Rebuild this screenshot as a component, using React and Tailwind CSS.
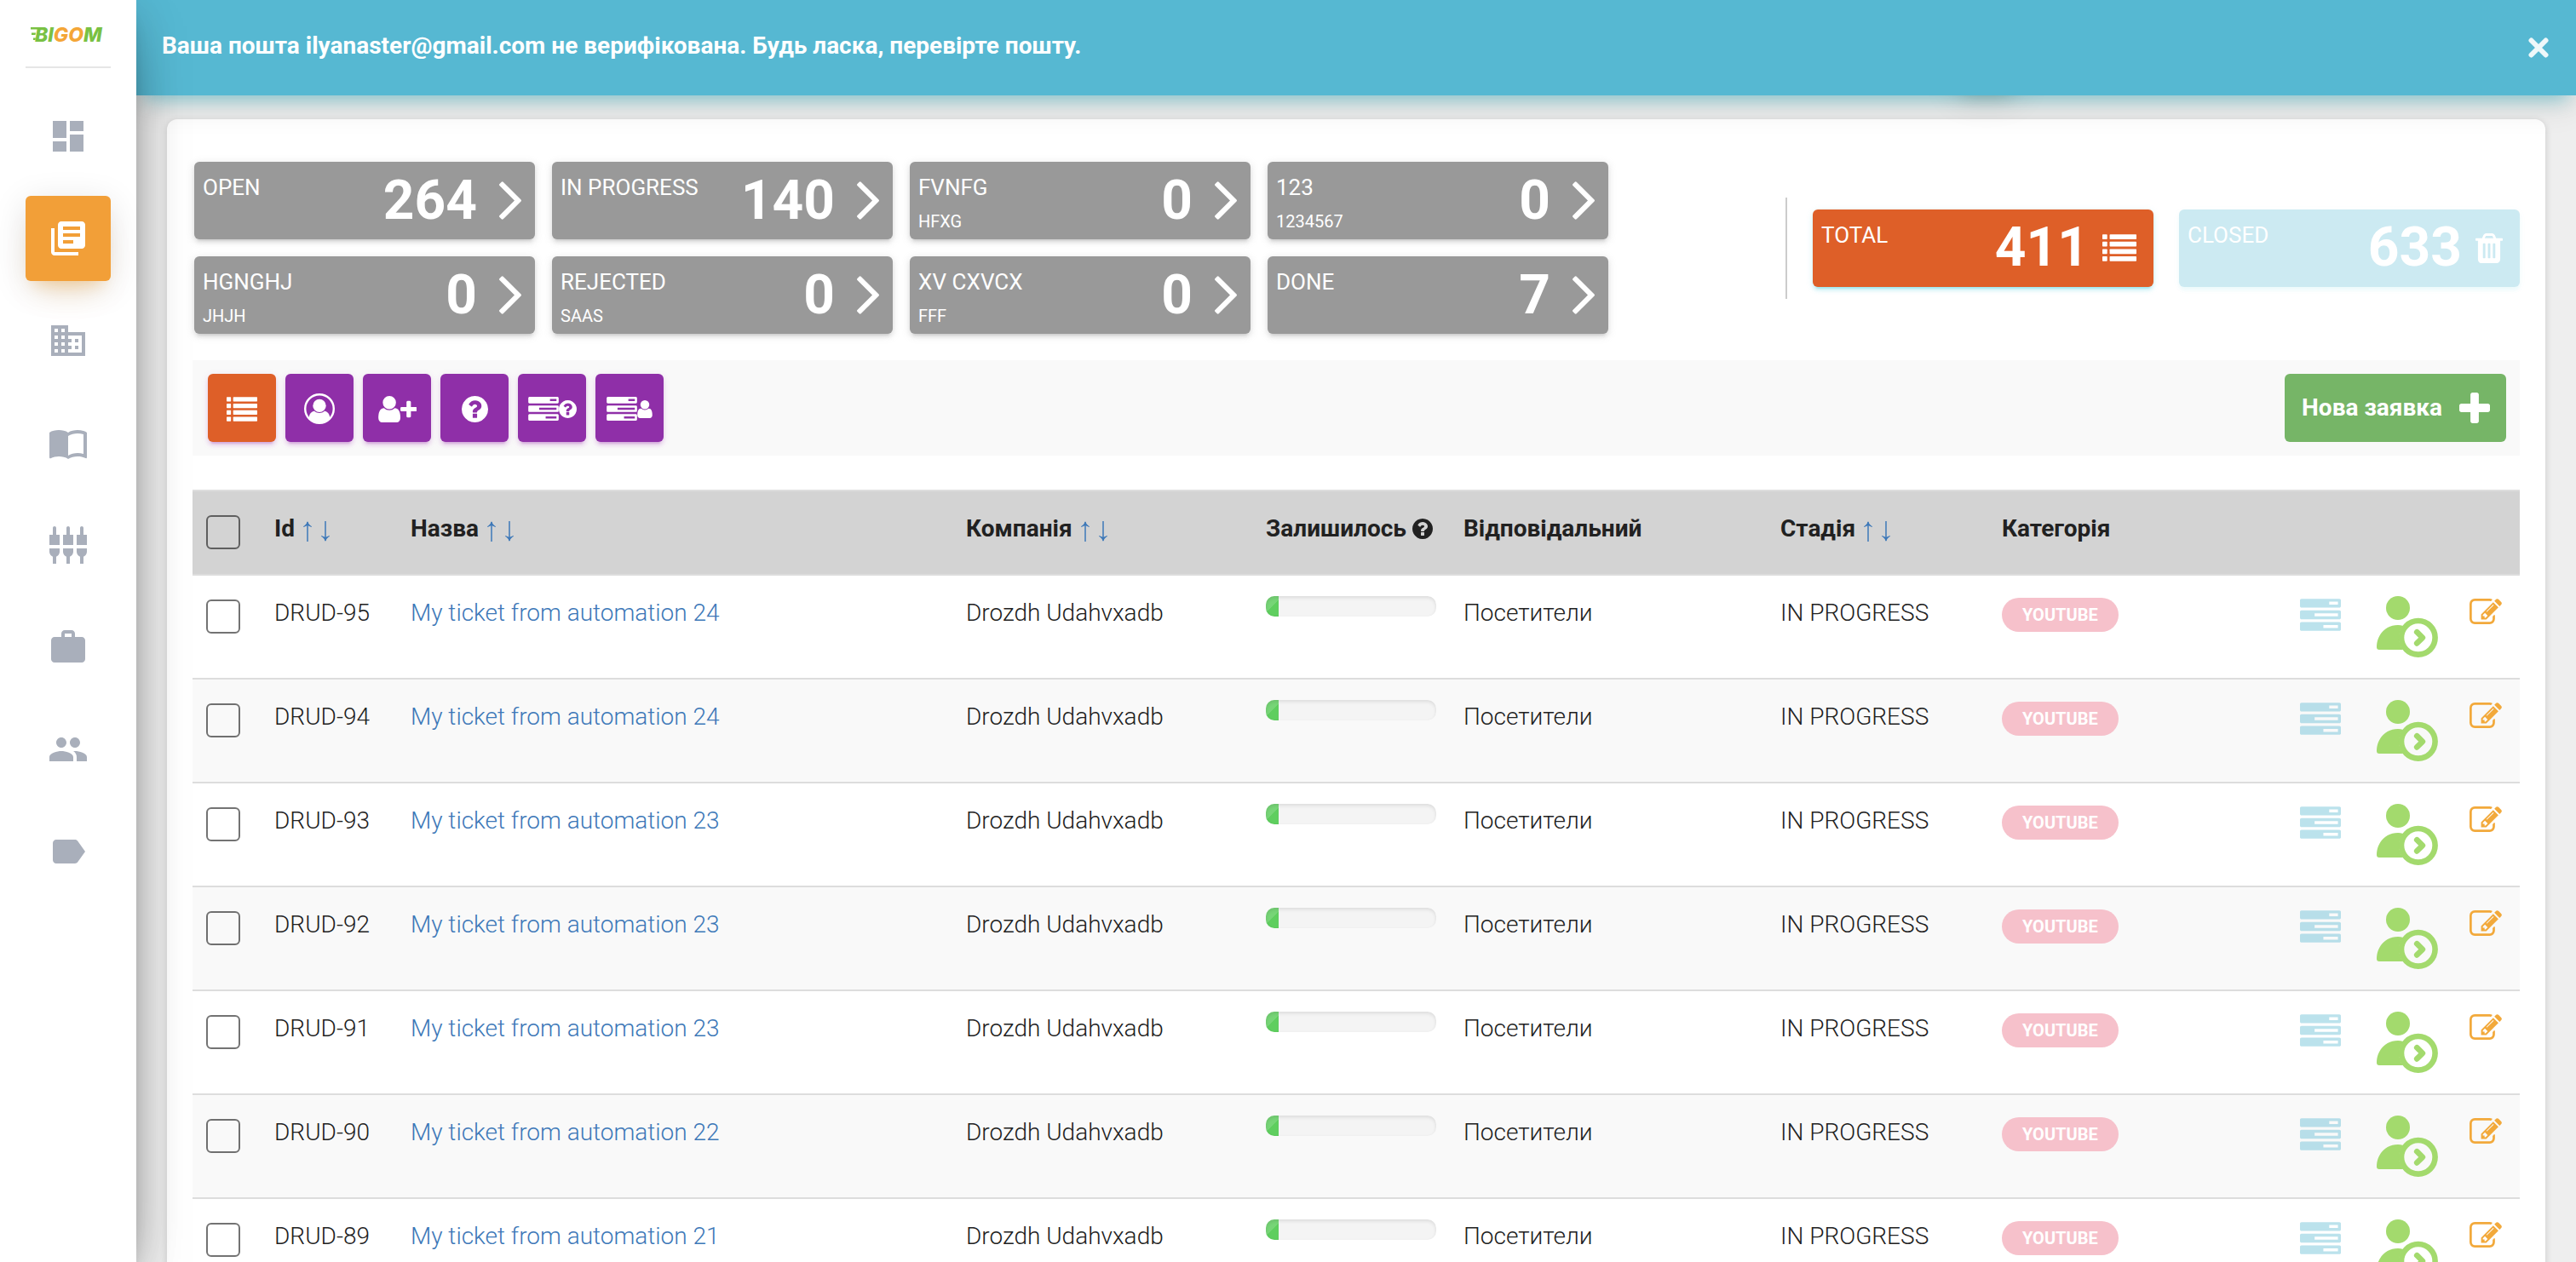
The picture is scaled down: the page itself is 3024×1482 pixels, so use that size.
import React from "react";
import {
  MdDashboard,
  MdLibraryBooks,
  MdBusiness,
  MdSettingsInputComponent,
  MdWork,
  MdPeople,
  MdLabel,
} from "react-icons/md";

const PATHS = {
  angle:
    "M1171 960q0 13-10 23l-466 466q-10 10-23 10t-23-10l-50-50q-10-10-10-23t10-23l393-393-393-393q-10-10-10-23t10-23l50-50q10-10 23-10t23 10l466 466q10 10 10 23z",
  tasks:
    "M1024 1408h640v-128h-640v128zm-384-512h1024v-128h-1024v128zm640-512h384v-128h-384v128zm512 832v256q0 26-19 45t-45 19h-1664q-26 0-45-19t-19-45v-256q0-26 19-45t45-19h1664q26 0 45 19t19 45zm0-512v256q0 26-19 45t-45 19h-1664q-26 0-45-19t-19-45v-256q0-26 19-45t45-19h1664q26 0 45 19t19 45zm0-512v256q0 26-19 45t-45 19h-1664q-26 0-45-19t-19-45v-256q0-26 19-45t45-19h1664q26 0 45 19t19 45z",
  question:
    "M1024 1376v-192q0-14-9-23t-23-9h-192q-14 0-23 9t-9 23v192q0 14 9 23t23 9h192q14 0 23-9t9-23zm256-672q0-88-55.5-163t-138.5-116-170-41q-243 0-371 213-15 24 8 42l132 100q7 6 19 6 16 0 25-12 53-68 86-92 34-24 86-24 48 0 85.5 26t37.5 59q0 38-20 61t-68 45q-63 28-115.5 86.5t-52.5 125.5v36q0 14 9 23t23 9h192q14 0 23-9t9-23q0-19 21.5-49.5t54.5-49.5q32-18 49-28.5t46-35 44.5-48 28-60.5 12.5-81zm384 192q0 209-103 385.5t-279.5 279.5-385.5 103-385.5-103-279.5-279.5-103-385.5 103-385.5 279.5-279.5 385.5-103 385.5 103 279.5 279.5 103 385.5z",
  user:
    "M1536 1399q0 109-62.5 187t-150.5 78h-854q-88 0-150.5-78t-62.5-187q0-85 8.5-160.5t31.5-152 58.5-131 94-89 134.5-34.5q131 128 313 128t313-128q76 0 134.5 34.5t94 89 58.5 131 31.5 152 8.5 160.5zm-256-887q0 159-112.5 271.5t-271.5 112.5-271.5-112.5-112.5-271.5 112.5-271.5 271.5-112.5 271.5 112.5 112.5 271.5z",
  trash:
    "M704 1376v-704q0-14-9-23t-23-9h-64q-14 0-23 9t-9 23v704q0 14 9 23t23 9h64q14 0 23-9t9-23zm256 0v-704q0-14-9-23t-23-9h-64q-14 0-23 9t-9 23v704q0 14 9 23t23 9h64q14 0 23-9t9-23zm256 0v-704q0-14-9-23t-23-9h-64q-14 0-23 9t-9 23v704q0 14 9 23t23 9h64q14 0 23-9t9-23zm-544-992h448l-48-117q-7-9-17-11h-317q-10 2-17 11zm928 32v64q0 14-9 23t-23 9h-96v948q0 83-47 143.5t-113 60.5h-832q-66 0-113-58.5t-47-141.5v-952h-96q-14 0-23-9t-9-23v-64q0-14 9-23t23-9h309l70-167q15-37 54-63t79-26h320q40 0 79 26t54 63l70 167h309q14 0 23 9t9 23z",
  plus:
    "M1600 736v192q0 40-28 68t-68 28h-416v416q0 40-28 68t-68 28h-192q-40 0-68-28t-28-68v-416h-416q-40 0-68-28t-28-68v-192q0-40 28-68t68-28h416v-416q0-40 28-68t68-28h192q40 0 68 28t28 68v416h416q40 0 68 28t28 68z",
  edit:
    "M888 1184l116-116-152-152-116 116v56h96v96h56zm440-720q-16-16-33 1l-350 350q-17 17-1 33t33-1l350-350q17-17 1-33zm80 594v190q0 119-84.5 203.5t-203.5 84.5h-832q-119 0-203.5-84.5t-84.5-203.5v-832q0-119 84.5-203.5t203.5-84.5h832q63 0 117 25 15 7 18 23 3 17-9 29l-49 49q-14 14-32 8-23-6-45-6h-832q-66 0-113 47t-47 113v832q0 66 47 113t113 47h832q66 0 113-47t47-113v-126q0-13 9-22l64-64q15-15 35-7t20 29zm-96-738l288 288-672 672h-288v-288zm444 132l-92 92-288-288 92-92q28-28 68-28t68 28l152 152q28 28 28 68t-28 68z",
  book:
    "M21 5c-1.11-.35-2.33-.5-3.5-.5-1.95 0-4.05.4-5.5 1.5-1.45-1.1-3.55-1.5-5.5-1.5S2.45 4.9 1 6v14.65c0 .25.25.5.5.5.1 0 .15-.05.25-.05C3.1 20.45 5.05 20 6.5 20c1.95 0 4.05.4 5.5 1.5 1.35-.85 3.8-1.5 5.5-1.5 1.65 0 3.35.3 4.75 1.05.1.05.15.05.25.05.25 0 .5-.25.5-.5V6c-.6-.45-1.25-.75-2-1zm0 13.5c-1.1-.35-2.3-.5-3.5-.5-1.7 0-4.15.65-5.5 1.5V8c1.35-.85 3.8-1.5 5.5-1.5 1.2 0 2.4.15 3.5.5v11.5z",
};

function Glyph({ name, box, className }) {
  return (
    <svg viewBox={box} className={className} fill="currentColor" aria-hidden="true">
      <path d={PATHS[name]} />
    </svg>
  );
}

function ListIcon({ className }) {
  return (
    <svg viewBox="0 128 1792 1408" className={className} fill="currentColor" aria-hidden="true">
      {[128, 512, 896, 1280].map((y) => (
        <g key={y}>
          <rect x="0" y={y} width="256" height="256" rx="32" />
          <rect x="384" y={y} width="1408" height="256" rx="32" />
        </g>
      ))}
    </svg>
  );
}

function BookIcon({ className }) {
  return <Glyph name="book" box="0 0 24 24" className={className} />;
}

function UserCircle() {
  return (
    <svg viewBox="0 0 36 36" className="size-9" aria-hidden="true">
      <circle cx="18" cy="18" r="16.8" fill="none" stroke="currentColor" strokeWidth="2.4" />
      <circle cx="18" cy="14.4" r="7.7" fill="currentColor" />
      <path
        d="M12 20.8C8.600 21.200 6.400 24 5.600 28.400A16 16 0 0 0 18 34.400A16 16 0 0 0 30.400 28.400C29.600 24 27.400 21.200 24 20.800C20.400 23.800 15.600 23.800 12 20.800Z"
        fill="currentColor"
      />
    </svg>
  );
}

function UserPlus() {
  return (
    <svg viewBox="256 128 2212 1536" className="h-[31px] w-[45px]" fill="currentColor" aria-hidden="true">
      <path d={PATHS.user} />
      <path d="M2436 768h-288V480q0-26-19-45t-45-19h-128q-26 0-45 19t-19 45v288h-288q-26 0-45 19t-19 45v128q0 26 19 45t45 19h288v288q0 26 19 45t45 19h128q26 0 45-19t19-45v-288h288q26 0 45-19t19-45V832q0-26-19-45t-45-19z" />
    </svg>
  );
}

function TakeTicket() {
  return (
    <svg viewBox="0 0 72 72" className="size-[72px]" aria-hidden="true">
      <circle cx="25" cy="14" r="14" fill="#a3da6d" />
      <path d="M0 60C0 45 11 34 25 34Q28 34 31 35A23 23 0 0 0 31 63H3Q0 63 0 60Z" fill="#a3da6d" />
      <circle cx="48.8" cy="48.8" r="19.8" fill="none" stroke="#a3da6d" strokeWidth="6.6" />
      <path
        d="M47.2 42.2L53.9 48.8L47.2 55.4"
        fill="none"
        stroke="#a3da6d"
        strokeWidth="6.6"
        strokeLinecap="round"
        strokeLinejoin="round"
      />
    </svg>
  );
}

const ARROW = "M5 0C5.6 2.5 7.5 4.8 10 6.2L9.6 7L5 5L.4 7L0 6.200C2.5 4.800 4.400 2.500 5 0Z";

function Sortable({ label }) {
  return (
    <div className="flex h-10 items-center gap-[10px]">
      {label}
      <span className="flex gap-[11px] pt-[6px] text-[#3d78b8]">
        <a href="#up" aria-label={`${label}: за зростанням`}>
          <svg viewBox="0 0 10 24" className="h-6 w-[10px]" aria-hidden="true">
            <path d="M5 1V24" stroke="currentColor" strokeWidth="1.5" />
            <path d={ARROW} fill="currentColor" />
          </svg>
        </a>
        <a href="#down" aria-label={`${label}: за спаданням`}>
          <svg viewBox="0 0 10 24" className="h-6 w-[10px] rotate-180" aria-hidden="true">
            <path d="M5 1V24" stroke="currentColor" strokeWidth="1.5" />
            <path d={ARROW} fill="currentColor" />
          </svg>
        </a>
      </span>
    </div>
  );
}

const NAV = [
  { label: "Панель", Icon: MdDashboard },
  { label: "Заявки", Icon: MdLibraryBooks, active: true },
  { label: "Компанії", Icon: MdBusiness },
  { label: "База знань", Icon: BookIcon },
  { label: "Інтеграції", Icon: MdSettingsInputComponent },
  { label: "Проєкти", Icon: MdWork },
  { label: "Користувачі", Icon: MdPeople },
  { label: "Мітки", Icon: MdLabel },
];

function Sidebar() {
  return (
    <aside className="relative z-20 flex w-40 shrink-0 flex-col items-center bg-white shadow-[0_32px_76px_-24px_rgba(0,0,0,0.56),0_8px_50px_0_rgba(0,0,0,0.12),0_16px_20px_-10px_rgba(0,0,0,0.2)]">
      <a
        href="#home"
        aria-label="BIGOM"
        className="flex h-20 w-[100px] items-center justify-center border-b-2 border-[#e6e6e6]"
      >
        <svg viewBox="0 0 92 36" className="h-9 w-[92px]" role="img">
          <path d="M2 11H16L15.400 13.500H2ZM3 17.500H8L7.500 20H3ZM5 23.500H8L7.500 26H5Z" fill="#79c143" />
          <text x="7" y="28" fontSize="23" fontWeight="800" fontStyle="italic" fontFamily="Inter, sans-serif" fill="#79c143">
            BI<tspan fill="#f4a637">GO</tspan>M
          </text>
        </svg>
      </a>
      <nav className="mt-[30px] flex flex-col gap-5">
        {NAV.map(({ label, Icon, active }) => (
          <a
            key={label}
            href="#nav"
            aria-label={label}
            className={
              active
                ? "flex size-[100px] items-center justify-center rounded-md bg-[#f29f38] text-white shadow-[0_24px_40px_-20px_rgba(255,152,0,0.28),0_8px_40px_0_rgba(0,0,0,0.12),0_14px_16px_-10px_rgba(255,152,0,0.2)]"
                : "flex size-[100px] items-center justify-center rounded-md text-[#a9afbb]"
            }
          >
            <Icon className="size-12" />
          </a>
        ))}
      </nav>
    </aside>
  );
}

const STATS = [
  { title: "OPEN", count: 264 },
  { title: "IN PROGRESS", count: 140 },
  { title: "FVNFG", sub: "HFXG", count: 0 },
  { title: "123", sub: "1234567", count: 0 },
  { title: "HGNGHJ", sub: "JHJH", count: 0 },
  { title: "REJECTED", sub: "SAAS", count: 0 },
  { title: "XV CXVCX", sub: "FFF", count: 0 },
  { title: "DONE", count: 7 },
];

function Tile({ title, sub, count, tone, tail, children }) {
  return (
    <button type="button" className={`flex h-[91px] w-[400px] rounded-md pl-[10px] text-left text-white ${tone}`}>
      <span className="flex flex-1 flex-col pt-[14px]">
        <span className="text-[26px] leading-8">{title}</span>
        {sub && <span className="mt-3 text-xl leading-6">{sub}</span>}
      </span>
      <span className={`flex h-full items-center ${tail}`}>
        <span className="text-[64px] leading-[64px] font-bold">{count}</span>
        {children}
      </span>
    </button>
  );
}

function Stats() {
  return (
    <section className="flex items-center justify-between pl-[2px]">
      <div className="grid grid-cols-4 gap-5">
        {STATS.map((s) => (
          <Tile
            key={s.title}
            {...s}
            tone="bg-[#999] shadow-[0_4px_4px_0_rgba(153,153,153,0.14),0_6px_2px_-4px_rgba(153,153,153,0.2),0_2px_10px_0_rgba(153,153,153,0.3)]"
            tail="gap-[26px] pr-4"
          >
            <Glyph name="angle" box="589 461 582 998" className="h-[45px] w-[26px]" />
          </Tile>
        ))}
      </div>
      <div className="flex items-center gap-[30px] border-l-2 border-[#ccc] py-[14px] pl-[30px]">
        <Tile
          title="TOTAL"
          count={411}
          tone="bg-[#de5f28] shadow-[0_4px_4px_0_rgba(0,188,212,0.14),0_6px_2px_-4px_rgba(0,188,212,0.2),0_2px_10px_0_rgba(0,188,212,0.12)]"
          tail="gap-4 pr-5"
        >
          <ListIcon className="h-8 w-10" />
        </Tile>
        <Tile
          title="CLOSED"
          count={633}
          tone="bg-[#cceaf2] shadow-[0_4px_4px_0_rgba(0,188,212,0.05),0_2px_10px_0_rgba(0,188,212,0.04)]"
          tail="gap-4 pr-5"
        >
          <Glyph name="trash" box="192 128 1408 1536" className="h-[35px] w-[32px]" />
        </Tile>
      </div>
    </section>
  );
}

const TOOLS = [
  { label: "Список", active: true, icon: <ListIcon className="h-[29px] w-9" /> },
  { label: "Мої заявки", icon: <UserCircle /> },
  { label: "Призначити", icon: <UserPlus /> },
  { label: "Без відповідального", icon: <Glyph name="question" box="128 128 1536 1536" className="size-[31px]" /> },
  {
    label: "Завдання без виконавця",
    icon: (
      <>
        <Glyph name="tasks" box="0 128 1792 1408" className="h-7 w-9" />
        <Glyph name="question" box="128 128 1536 1536" className="size-[21px]" />
      </>
    ),
  },
  {
    label: "Завдання з виконавцем",
    icon: (
      <>
        <Glyph name="tasks" box="0 128 1792 1408" className="h-7 w-9" />
        <Glyph name="user" box="256 128 1280 1536" className="h-[21px] w-[18px]" />
      </>
    ),
  },
];

function Toolbar() {
  return (
    <section className="mt-[31px] flex items-center justify-between bg-[#f9f9f9] py-4 pr-4 pl-[18px]">
      <div className="flex gap-[11px]">
        {TOOLS.map((t) => (
          <button
            key={t.label}
            type="button"
            aria-label={t.label}
            className={`flex size-20 items-center justify-center rounded-md pt-[2px] text-white shadow-[0_4px_4px_0_rgba(156,39,176,0.14),0_6px_2px_-4px_rgba(156,39,176,0.2),0_2px_10px_0_rgba(156,39,176,0.12)] ${
              t.active ? "bg-[#de5f28]" : "bg-[#8f2fa8]"
            }`}
          >
            {t.icon}
          </button>
        ))}
      </div>
      <button
        type="button"
        className="flex h-20 items-center gap-5 rounded-md bg-[#76b567] pr-[19px] pl-5 text-[28px] font-bold text-white"
      >
        Нова заявка
        <Glyph name="plus" box="192 128 1408 1408" className="size-9" />
      </button>
    </section>
  );
}

const TICKETS = [
  { id: "DRUD-95", name: "My ticket from automation 24" },
  { id: "DRUD-94", name: "My ticket from automation 24" },
  { id: "DRUD-93", name: "My ticket from automation 23" },
  { id: "DRUD-92", name: "My ticket from automation 23" },
  { id: "DRUD-91", name: "My ticket from automation 23" },
  { id: "DRUD-90", name: "My ticket from automation 22" },
  { id: "DRUD-89", name: "My ticket from automation 21" },
];

function Check({ label }) {
  return (
    <input
      type="checkbox"
      aria-label={label}
      className="mt-1 block size-10 appearance-none rounded-md border-2 border-black/55"
    />
  );
}

function Progress({ value }) {
  return (
    <div
      role="progressbar"
      aria-label="Залишилось"
      aria-valuenow={value}
      className="relative h-6 w-[200px] overflow-hidden rounded-[10px] bg-[#f4f4f4]"
    >
      <div
        className="h-full bg-[#5fce5f] bg-[linear-gradient(135deg,rgba(255,255,255,0.15)_50%,transparent_50%)]"
        style={{ width: `${value}%` }}
      />
      <div className="absolute inset-0 rounded-[10px] shadow-[inset_0_2px_4px_rgba(0,0,0,0.1)]" />
    </div>
  );
}

function Tickets() {
  const th = "border-y-2 border-[#ddd] px-4 pt-6 text-left align-top font-bold whitespace-nowrap";
  const td = "h-[122px] border-b-2 border-[#ddd] px-4 pt-6 align-top";
  return (
    <table className="mt-10 w-full table-fixed border-separate border-spacing-0 text-[28px] leading-10 text-[#212121]">
      <colgroup>
        <col className="w-20" />
        <col className="w-40" />
        <col />
        <col className="w-[352px]" />
        <col className="w-[232px]" />
        <col className="w-[372px]" />
        <col className="w-[260px]" />
        <col className="w-[350px]" />
        <col className="w-[274px]" />
      </colgroup>
      <thead className="bg-[#d3d3d3]">
        <tr className="h-[101px]">
          <th className={th}>
            <Check label="Вибрати всі" />
          </th>
          <th className={th}>
            <Sortable label="Id" />
          </th>
          <th className={th}>
            <Sortable label="Назва" />
          </th>
          <th className={th}>
            <Sortable label="Компанія" />
          </th>
          <th className={th}>
            <div className="flex h-10 items-center gap-[7px]">
              Залишилось
              <Glyph name="question" box="128 128 1536 1536" className="size-6" />
            </div>
          </th>
          <th className={th}>Відповідальний</th>
          <th className={th}>
            <Sortable label="Стадія" />
          </th>
          <th className={th}>Категорія</th>
          <th className={th} aria-label="Дії" />
        </tr>
      </thead>
      <tbody className="font-light">
        {TICKETS.map((t) => (
          <tr key={t.id} className="even:bg-[#f9f9f9]">
            <td className={td}>
              <Check label={`Вибрати ${t.id}`} />
            </td>
            <td className={`${td} whitespace-nowrap`}>{t.id}</td>
            <td className={td}>
              <a href="#ticket" className="text-[#3d78b8]">
                {t.name}
              </a>
            </td>
            <td className={td}>Drozdh Udahvxadb</td>
            <td className={td}>
              <Progress value={7.5} />
            </td>
            <td className={td}>Посетители</td>
            <td className={td}>IN PROGRESS</td>
            <td className={td}>
              <span className="mt-[2px] inline-flex h-10 items-center rounded-full bg-[#f6c1cb] px-6 align-top text-xl font-bold text-white">
                YOUTUBE
              </span>
            </td>
            <td className={td}>
              <div className="flex items-start pr-[5px]">
                <button type="button" aria-label="Завдання" className="mt-[3px] text-[#56b8d2] opacity-40">
                  <Glyph name="tasks" box="0 128 1792 1408" className="h-[38px] w-12" />
                </button>
                <button type="button" aria-label="Взяти заявку" className="ml-[42px]">
                  <TakeTicket />
                </button>
                <button type="button" aria-label="Редагувати" className="mt-[3px] ml-auto text-[#f2a93b]">
                  <Glyph name="edit" box="0 128 1792 1408" className="h-[30px] w-[38px]" />
                </button>
              </div>
            </td>
          </tr>
        ))}
      </tbody>
    </table>
  );
}

function Banner() {
  return (
    <div className="relative z-10 isolate">
      <div className="absolute right-[657px] bottom-2 -z-10 size-[70px] rounded-md shadow-[0_8px_40px_0_rgba(0,0,0,0.16),0_12px_20px_-8px_rgba(60,60,0,0.25)]" />
      <div
        role="alert"
        className="flex h-28 items-center justify-between bg-[#56b8d2] pr-8 pl-[30px] text-[28px] leading-10 font-bold text-white shadow-[0_8px_40px_0_rgba(0,0,0,0.14),0_14px_20px_-10px_rgba(0,188,212,0.4)]"
      >
        <p className="pb-1">Ваша пошта ilyanaster@gmail.com не верифікована. Будь ласка, перевірте пошту.</p>
        <button type="button" aria-label="Закрити" className="opacity-90">
          <svg viewBox="0 0 24 24" className="size-6" aria-hidden="true">
            <path d="M3.5 3.5L20.5 20.5M20.5 3.5L3.5 20.5" stroke="currentColor" strokeWidth="6" strokeLinecap="round" />
          </svg>
        </button>
      </div>
    </div>
  );
}

export default function App() {
  return (
    <div className="flex h-screen overflow-hidden bg-[#eee] font-[Roboto,sans-serif]">
      <Sidebar />
      <div className="min-w-0 flex-1">
        <Banner />
        <main className="mx-9 mt-7 rounded-xl bg-white px-[30px] pt-[50px] pb-10 shadow-[0_2px_8px_0_rgba(0,0,0,0.16)]">
          <Stats />
          <Toolbar />
          <Tickets />
        </main>
      </div>
    </div>
  );
}
